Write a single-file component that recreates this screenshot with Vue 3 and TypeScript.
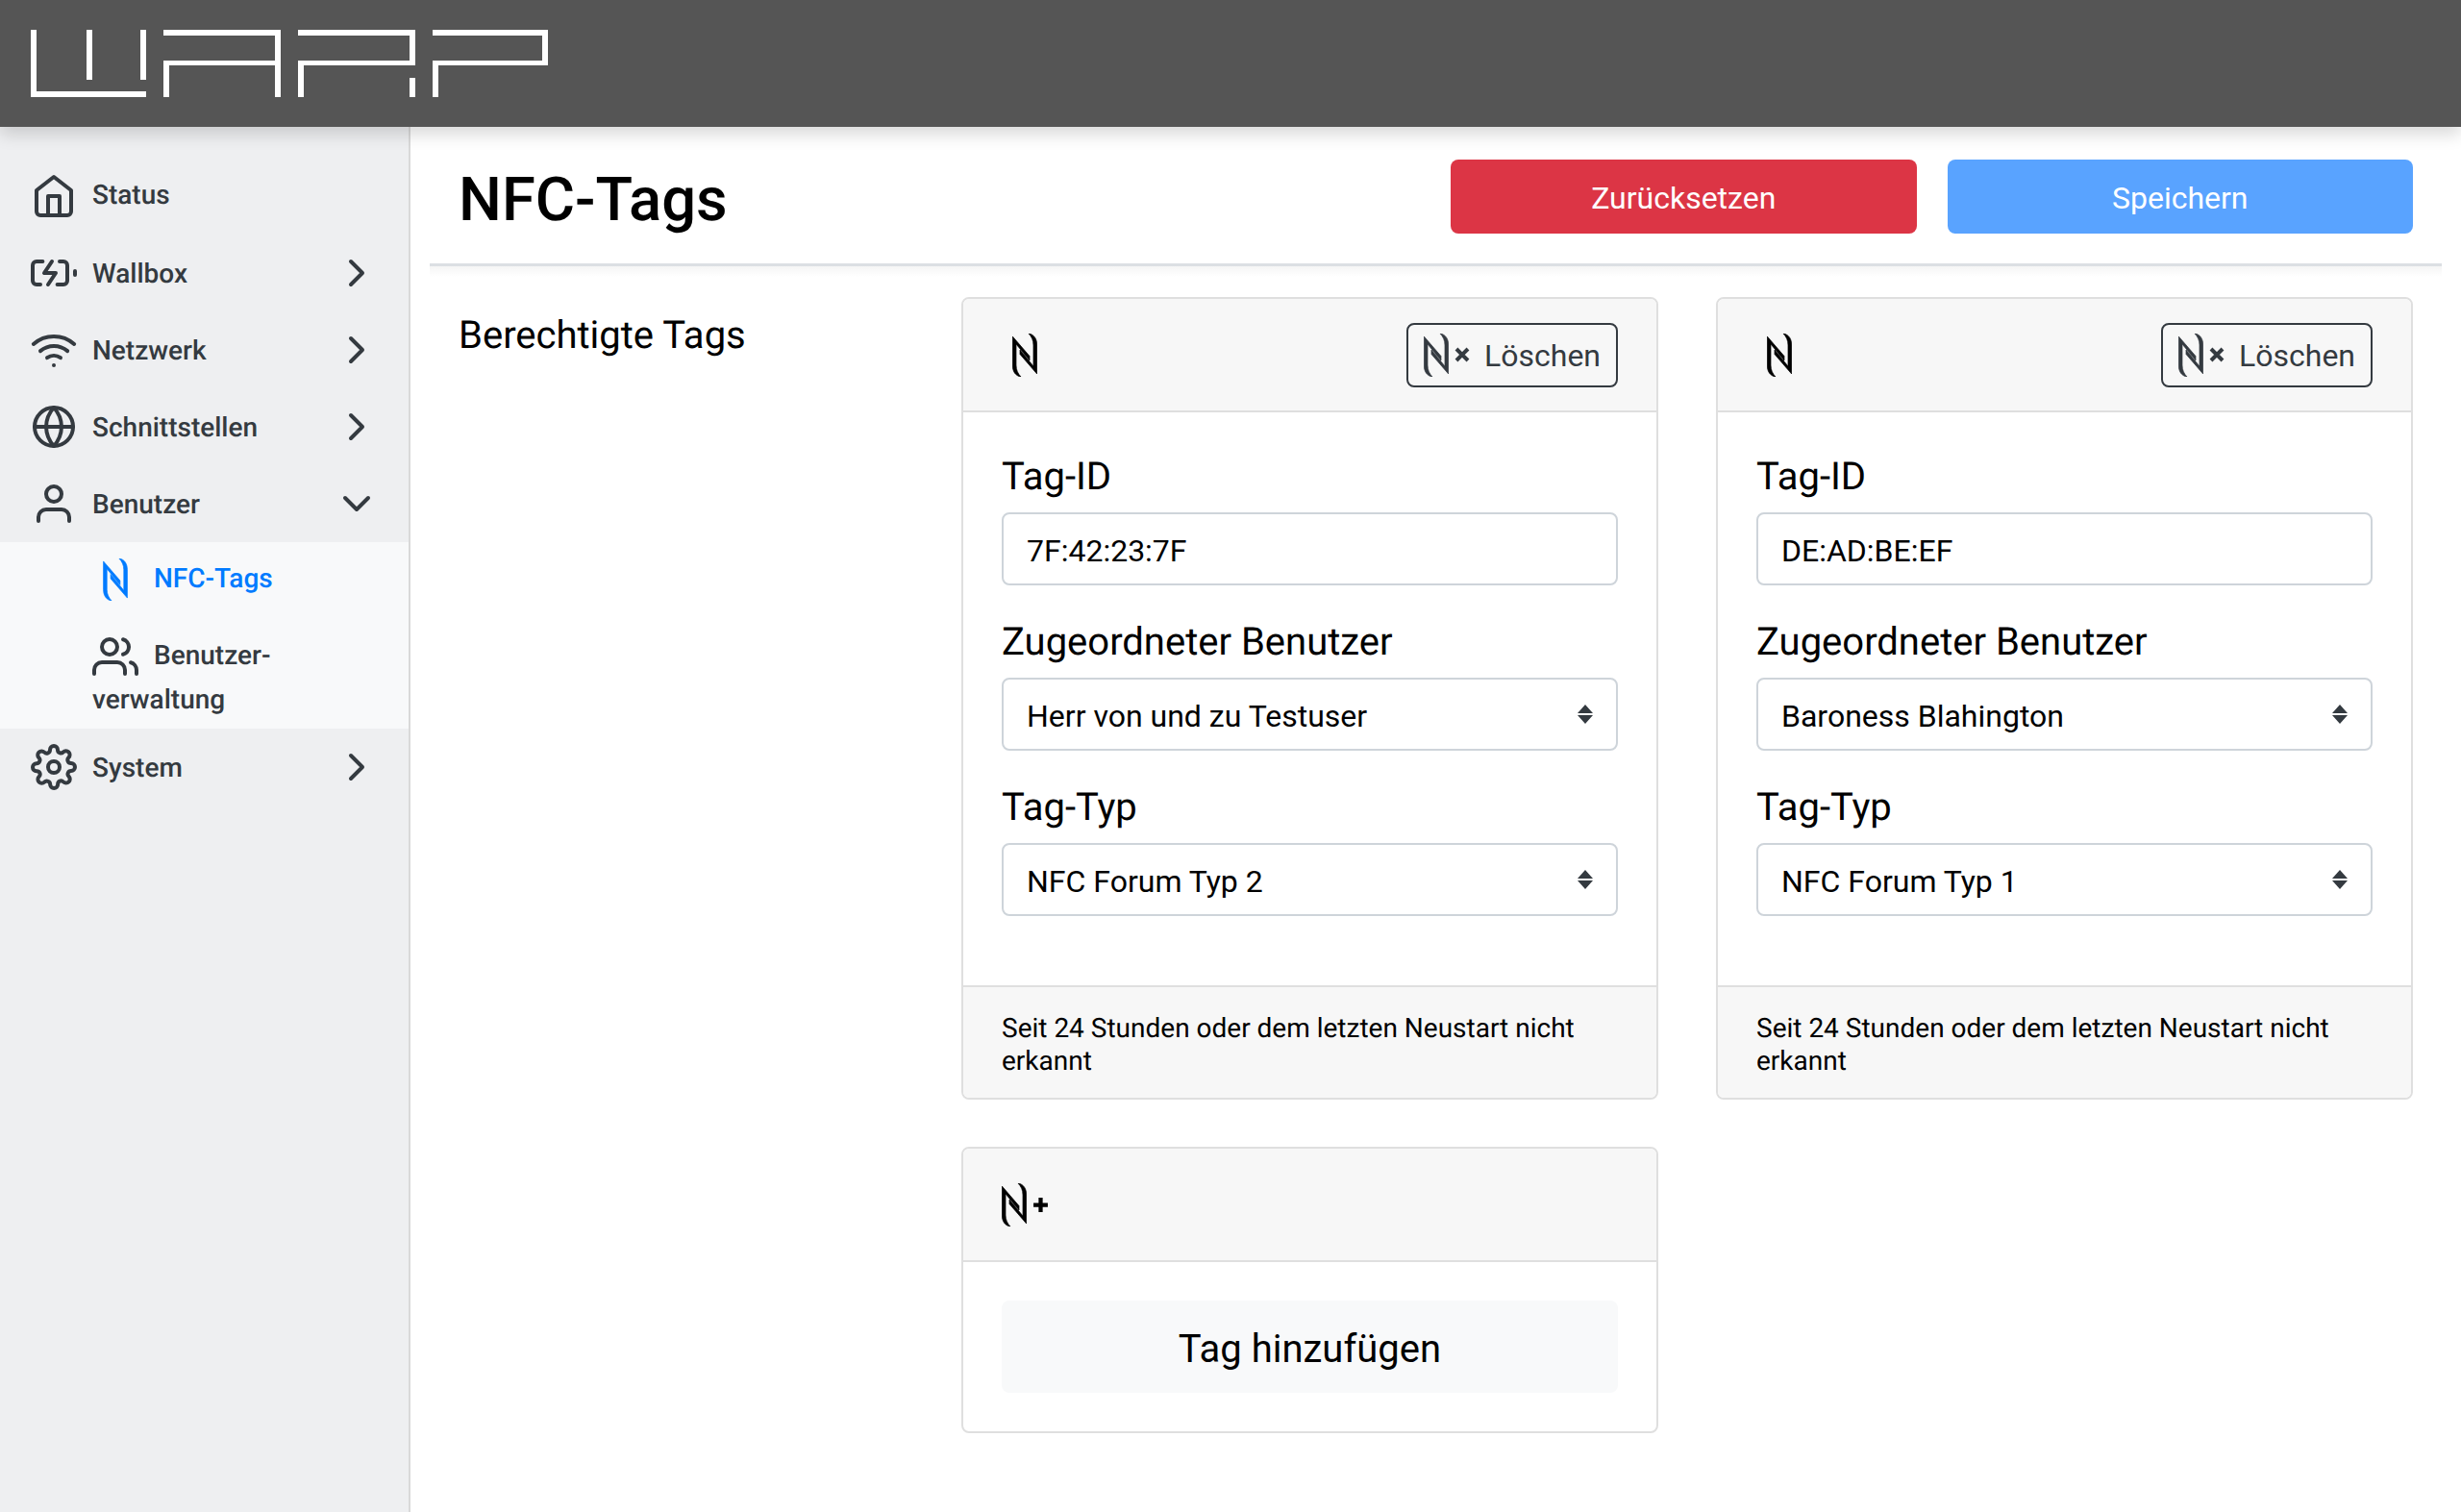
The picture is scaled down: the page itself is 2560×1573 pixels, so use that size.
<script setup lang="ts">
interface Tag { id: string; user: string; type: string }
const tags: Tag[] = [
  { id: '7F:42:23:7F', user: 'Herr von und zu Testuser', type: 'NFC Forum Typ 2' },
  { id: 'DE:AD:BE:EF', user: 'Baroness Blahington', type: 'NFC Forum Typ 1' },
]
</script>

<template>
  <div class="page">
    <svg class="symbols" aria-hidden="true">
      <symbol id="nfc" viewBox="0 0 26 45">
        <path stroke="currentColor" stroke-width="0.7" d="M0.300 3V33C0.300 39 3 44 9 45C6 42 4 38 4 33V11L18 28V23.500Z" />
        <path stroke="currentColor" stroke-width="0.7" d="M25.700 42V12C25.700 6 23 1 17 0C20 3 22 7 22 12V34L8 17V21.500Z" />
      </symbol>
    </svg>

    <header class="topbar">
      <svg class="logo" viewBox="0 0 540 70" fill="#fff">
        <path d="M0 0h6v64h114v6H0zM58 0h6v52h-6zM114 0h6v52h-6z" />
        <path d="M138 0h122v70h-6V37H144v33h-6V32h116V6H138z" />
        <path d="M278 0h122v37H284v33h-6V32h116V6H278zM394 50h6v20h-6z" />
        <path d="M418 0h120v37H424v33h-6V32h114V6H418z" />
      </svg>
    </header>

    <div class="layout">
      <nav class="sidebar">
        <a class="nav-item first">
          <svg class="ico" viewBox="0 0 24 24"><path d="M3 9l9-7 9 7v11a2 2 0 0 1-2 2H5a2 2 0 0 1-2-2z" /><polyline points="9 22 9 12 15 12 15 22" /></svg>
          <span class="nav-text status-text">Status</span>
        </a>
        <a class="nav-item">
          <svg class="ico" viewBox="0 0 24 24"><path d="M5 18H3a2 2 0 0 1-2-2V8a2 2 0 0 1 2-2h3.190M15 6h2a2 2 0 0 1 2 2v8a2 2 0 0 1-2 2h-3.190" /><line x1="23" y1="13" x2="23" y2="11" /><polyline points="11 6 7 12 13 12 9 18" /></svg>
          <span class="nav-text">Wallbox</span>
          <svg class="chev" viewBox="0 0 24 24"><polyline points="9 18 15 12 9 6" /></svg>
        </a>
        <a class="nav-item">
          <svg class="ico" viewBox="0 0 24 24"><path d="M5 12.550a11 11 0 0 1 14.080 0" /><path d="M1.420 9a16 16 0 0 1 21.160 0" /><path d="M8.530 16.110a6 6 0 0 1 6.950 0" /><line x1="12" y1="20" x2="12.010" y2="20" /></svg>
          <span class="nav-text">Netzwerk</span>
          <svg class="chev" viewBox="0 0 24 24"><polyline points="9 18 15 12 9 6" /></svg>
        </a>
        <a class="nav-item">
          <svg class="ico" viewBox="0 0 24 24"><circle cx="12" cy="12" r="10" /><line x1="2" y1="12" x2="22" y2="12" /><path d="M12 2a15.300 15.300 0 0 1 4 10 15.300 15.300 0 0 1-4 10 15.300 15.300 0 0 1-4-10 15.300 15.300 0 0 1 4-10z" /></svg>
          <span class="nav-text">Schnittstellen</span>
          <svg class="chev" viewBox="0 0 24 24"><polyline points="9 18 15 12 9 6" /></svg>
        </a>
        <a class="nav-item">
          <svg class="ico" viewBox="0 0 24 24"><path d="M20 21v-2a4 4 0 0 0-4-4H8a4 4 0 0 0-4 4v2" /><circle cx="12" cy="7" r="4" /></svg>
          <span class="nav-text">Benutzer</span>
          <svg class="chev" viewBox="0 0 24 24"><polyline points="6 9 12 15 18 9" /></svg>
        </a>
        <div class="submenu">
          <a class="sub-item active">
            <svg class="ico-nfc" fill="currentColor"><use href="#nfc" /></svg>
            <span>NFC-Tags</span>
          </a>
          <a class="sub-item wrap">
            <svg class="ico inline" viewBox="0 0 24 24"><path d="M17 21v-2a4 4 0 0 0-4-4H5a4 4 0 0 0-4 4v2" /><circle cx="9" cy="7" r="4" /><path d="M23 21v-2a4 4 0 0 0-3-3.870" /><path d="M16 3.130a4 4 0 0 1 0 7.750" /></svg>Benutzer-<br />verwaltung
          </a>
        </div>
        <a class="nav-item">
          <svg class="ico" viewBox="0 0 24 24"><circle cx="12" cy="12" r="3" /><path d="M19.400 15a1.650 1.650 0 0 0 .33 1.820l.06.06a2 2 0 0 1 0 2.830 2 2 0 0 1-2.830 0l-.06-.06a1.650 1.650 0 0 0-1.820-.33 1.650 1.650 0 0 0-1 1.510V21a2 2 0 0 1-2 2 2 2 0 0 1-2-2v-.09A1.650 1.650 0 0 0 9 19.400a1.650 1.650 0 0 0-1.820.33l-.06.06a2 2 0 0 1-2.830 0 2 2 0 0 1 0-2.830l.06-.06a1.650 1.650 0 0 0 .33-1.820 1.650 1.650 0 0 0-1.510-1H3a2 2 0 0 1-2-2 2 2 0 0 1 2-2h.09A1.650 1.650 0 0 0 4.600 9a1.650 1.650 0 0 0-.33-1.820l-.06-.06a2 2 0 0 1 0-2.830 2 2 0 0 1 2.830 0l.06.06a1.650 1.650 0 0 0 1.820.33H9a1.650 1.650 0 0 0 1-1.510V3a2 2 0 0 1 2-2 2 2 0 0 1 2 2v.09a1.650 1.650 0 0 0 1 1.510 1.650 1.650 0 0 0 1.820-.33l.06-.06a2 2 0 0 1 2.830 0 2 2 0 0 1 0 2.830l-.06.06a1.650 1.650 0 0 0-.33 1.820V9a1.650 1.650 0 0 0 1.510 1H21a2 2 0 0 1 2 2 2 2 0 0 1-2 2h-.09a1.650 1.650 0 0 0-1.510 1z" /></svg>
          <span class="nav-text">System</span>
          <svg class="chev" viewBox="0 0 24 24"><polyline points="9 18 15 12 9 6" /></svg>
        </a>
      </nav>

      <main class="main">
        <div class="title-row">
          <h1 class="title">NFC-Tags</h1>
          <div class="actions">
            <button class="btn danger">Zurücksetzen</button>
            <button class="btn primary">Speichern</button>
          </div>
        </div>

        <div class="content">
          <div class="section-label">Berechtigte Tags</div>
          <div class="cards">
            <section v-for="tag in tags" :key="tag.id" class="card">
              <div class="card-header">
                <svg class="nfc-head" fill="currentColor"><use href="#nfc" /></svg>
                <button class="delete">
                  <svg class="nfc-del" fill="currentColor"><use href="#nfc" /></svg>
                  <svg class="x-mark" viewBox="0 0 16 16"><path d="M2 2l12 12M14 2L2 14" /></svg>
                  <span>Löschen</span>
                </button>
              </div>
              <div class="card-body">
                <label class="field-label">Tag-ID</label>
                <input class="control" :value="tag.id" readonly />
                <label class="field-label">Zugeordneter Benutzer</label>
                <div class="select-wrap">
                  <select class="control"><option>{{ tag.user }}</option></select>
                  <svg class="arrows" viewBox="0 0 16 20"><path d="M8 0l8 9H0zM8 20l-8-9h16z" /></svg>
                </div>
                <label class="field-label">Tag-Typ</label>
                <div class="select-wrap">
                  <select class="control"><option>{{ tag.type }}</option></select>
                  <svg class="arrows" viewBox="0 0 16 20"><path d="M8 0l8 9H0zM8 20l-8-9h16z" /></svg>
                </div>
              </div>
              <div class="card-footer">Seit 24 Stunden oder dem letzten Neustart nicht erkannt</div>
            </section>

            <section class="card add-card">
              <div class="card-header">
                <span class="add-head">
                  <svg class="nfc-head" fill="currentColor"><use href="#nfc" /></svg>
                  <svg class="plus-mark" viewBox="0 0 16 16"><path d="M8 1v14M1 8h14" /></svg>
                </span>
              </div>
              <div class="add-body">
                <button class="add-btn">Tag hinzufügen</button>
              </div>
            </section>
          </div>
        </div>
      </main>
    </div>
  </div>
</template>

<style>
html, body { margin: 0; background: #fff; }
</style>

<style scoped>
.page {
  height: 1573px;
  overflow: hidden;
  display: flex;
  flex-direction: column;
  font-family: Roboto, "Liberation Sans", sans-serif;
  text-rendering: geometricPrecision;
  color: #000;
  position: relative;
}
.symbols { display: none; }

.topbar {
  flex: none;
  height: 132px;
  background: #555;
  box-sizing: border-box;
  padding: 31px 0 0 32px;
  box-shadow: 0 8px 16px rgba(0, 0, 0, 0.15);
  position: relative;
  z-index: 2;
}
.logo { display: block; width: 540px; height: 70px; }

.layout { flex: 1; display: flex; min-height: 0; }

.sidebar {
  flex: none;
  width: 427px;
  box-sizing: border-box;
  background: #eeeff1;
  border-right: 2px solid #d9d9d9;
  color: #343a40;
  font-size: 28px;
  font-weight: 500;
}
.nav-item {
  display: flex;
  align-items: center;
  height: 80px;
  padding: 0 30px 0 32px;
}
.nav-item.first { margin-top: 31px; height: 81px; }
.status-text { padding-bottom: 3px; }
.ico {
  flex: none;
  width: 48px;
  height: 48px;
  fill: none;
  stroke: currentColor;
  stroke-width: 2;
  stroke-linecap: round;
  stroke-linejoin: round;
}
.nav-text { margin-left: 16px; flex: 1; }
.chev {
  flex: none;
  width: 48px;
  height: 48px;
  fill: none;
  stroke: currentColor;
  stroke-width: 2;
  stroke-linecap: round;
  stroke-linejoin: round;
}
.submenu { background: #f8f9fa; }
.sub-item { display: flex; align-items: center; padding-left: 96px; }
.sub-item.active {
  color: #007bff;
  height: 74px;
}
.ico-nfc { flex: none; width: 26px; height: 44px; margin: 4px 27px 0 11px; }
.sub-item.wrap {
  display: block;
  line-height: 46px;
  height: 103px;
  padding-top: 17px;
}
.ico.inline { vertical-align: -12px; margin-right: 16px; transform: translateY(4px); }

.main {
  flex: 1;
  min-width: 0;
  padding: 0 20px;
}
.title-row {
  height: 145px;
  box-sizing: border-box;
  padding: 34px 30px 0;
  display: flex;
  justify-content: space-between;
  position: relative;
}
.title-row::after {
  content: "";
  position: absolute;
  left: 0;
  right: 0;
  top: 142px;
  height: 14px;
  background: linear-gradient(#dcdfe3 0, #dcdfe3 3px, #f5f5f5 3px, #fff 100%);
}
.title {
  margin: 4px 0 0;
  font-size: 63.300px;
  font-weight: 500;
  line-height: 77px;
}
.actions { display: flex; gap: 32px; height: 77px; }
.btn {
  width: 484.500px;
  height: 77px;
  border: 0;
  border-radius: 8px;
  padding: 2px 0 0;
  color: #fff;
  font: inherit;
  font-size: 32px;
}
.danger { background: #dc3545; }
.primary { background: #59a3ff; }

.content {
  display: flex;
  padding: 32px 30px 0;
  position: relative;
}
.section-label {
  flex: none;
  width: 523px;
  font-size: 40px;
  line-height: 48px;
  padding-top: 16px;
}
.cards {
  flex: 1;
  display: grid;
  grid-template-columns: 725px 725px;
  column-gap: 60px;
  row-gap: 49px;
  align-content: start;
}
.card {
  border: 2px solid #dfdfdf;
  border-radius: 8px;
  overflow: hidden;
  background: #fff;
}
.card-header {
  height: 118px;
  box-sizing: border-box;
  background: #f7f7f7;
  border-bottom: 2px solid #dfdfdf;
  display: flex;
  justify-content: space-between;
  align-items: center;
  padding: 0 40px 0 51px;
  color: #000;
}
.nfc-head { display: block; width: 26px; height: 45px; flex: none; }
.delete {
  display: flex;
  align-items: center;
  width: 220px;
  height: 67px;
  box-sizing: border-box;
  padding: 2px 0 0 16px;
  background: transparent;
  border: 2px solid #343a40;
  border-radius: 8px;
  color: #343a40;
  font: inherit;
  font-size: 32px;
}
.nfc-del { width: 26px; height: 45px; flex: none; margin-top: -2px; }
.x-mark {
  width: 16px;
  height: 16px;
  margin: -2px 15px 0 6px;
  fill: none;
  stroke: currentColor;
  stroke-width: 4;
  flex: none;
}
.card-body {
  padding: 40px 40px 40px;
  height: 596px;
  box-sizing: border-box;
  display: flex;
  flex-direction: column;
}
.field-label {
  display: block;
  font-size: 40px;
  line-height: 48px;
  padding-top: 3px;
  margin-bottom: 13px;
}
.control {
  display: block;
  width: 100%;
  height: 76px;
  box-sizing: border-box;
  border: 2px solid #ced4da;
  border-radius: 8px;
  background: #fff;
  color: #000;
  font: inherit;
  font-size: 32px;
  padding: 3px 24px 0;
  margin: 0 0 32px;
  outline: none;
  appearance: none;
}
.select-wrap { position: relative; }
.arrows {
  position: absolute;
  right: 26px;
  top: 28px;
  width: 16px;
  height: 20px;
  fill: #343a40;
}
.card-footer {
  background: #f7f7f7;
  border-top: 2px solid #dfdfdf;
  box-sizing: border-box;
  height: 117px;
  padding: 26px 40px 0;
  font-size: 28px;
  line-height: 34px;
}
.add-head { display: flex; align-items: center; margin-left: -11px; }
.plus-mark {
  width: 17px;
  height: 17px;
  margin-left: 6px;
  fill: none;
  stroke: currentColor;
  stroke-width: 4;
}
.add-body { padding: 40px; }
.add-btn {
  display: block;
  width: 100%;
  height: 96px;
  border: 0;
  border-radius: 8px;
  padding: 5px 0 0;
  background: #f8f9fa;
  color: #000;
  font: inherit;
  font-size: 40px;
}
</style>
